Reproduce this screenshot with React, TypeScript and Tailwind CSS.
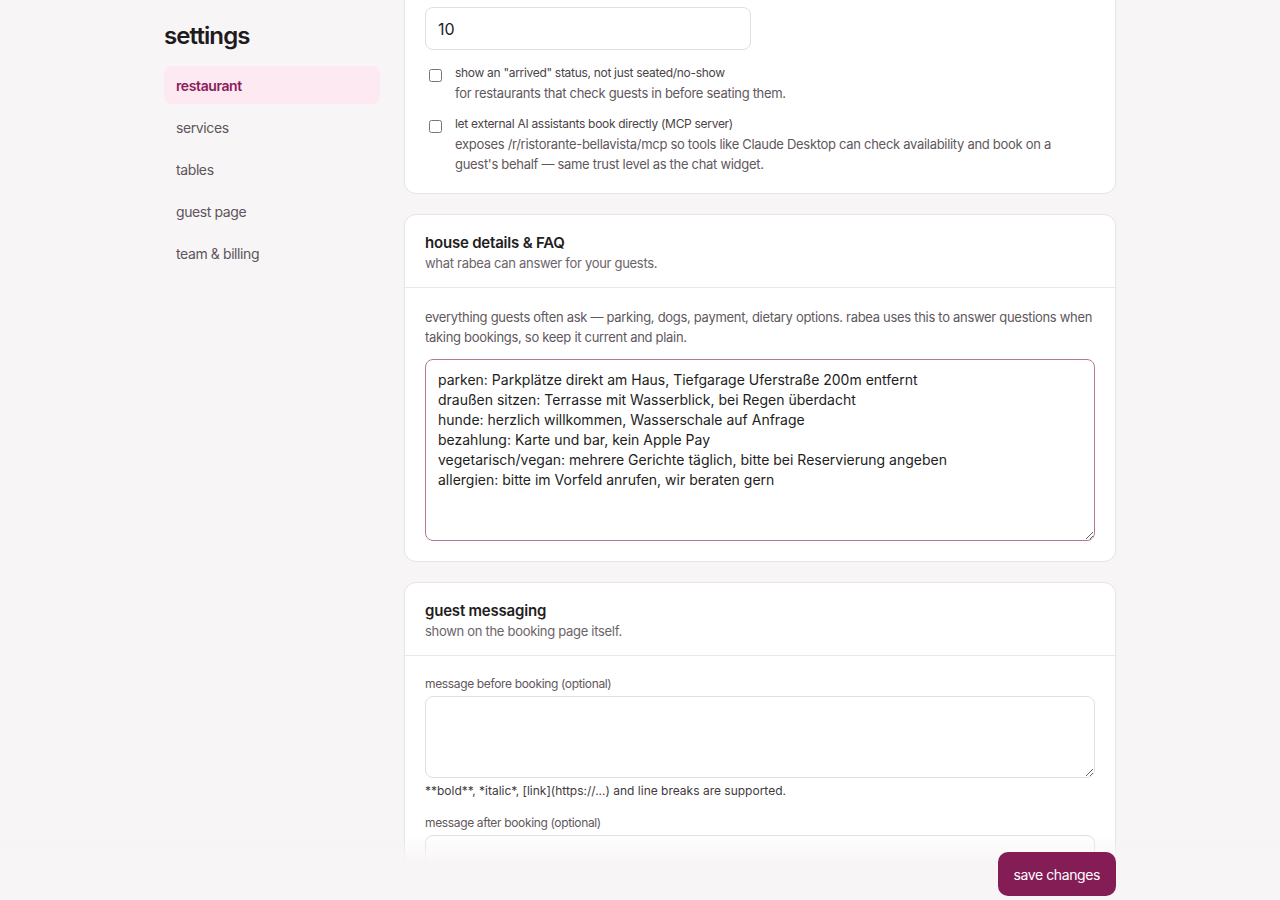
import { useState } from "react";

const navItems = ["restaurant", "services", "tables", "guest page", "team & billing"];

const faq = `parken: Parkplätze direkt am Haus, Tiefgarage Uferstraße 200m entfernt
draußen sitzen: Terrasse mit Wasserblick, bei Regen überdacht
hunde: herzlich willkommen, Wasserschale auf Anfrage
bezahlung: Karte und bar, kein Apple Pay
vegetarisch/vegan: mehrere Gerichte täglich, bitte bei Reservierung angeben
allergien: bitte im Vorfeld anrufen, wir beraten gern`;

function CardHeader({ title, sub }: { title: string; sub: string }) {
  return (
    <div className="px-5 pt-[17px] pb-[15px] border-b border-[#ece8eb]">
      <div className="text-[15px] leading-[22px] font-semibold tracking-[-0.2px] text-[#231d21]">{title}</div>
      <div className="text-[13px] leading-[18px] tracking-[-0.3px] text-[#6b6469]">{sub}</div>
    </div>
  );
}

function Check({ label, desc }: { label: string; desc: string[] }) {
  return (
    <label className="flex gap-[13px] items-start">
      <input type="checkbox" className="ml-1 mt-[4px] h-[13px] w-[13px] shrink-0" />
      <div>
        <div className="text-[12px] leading-4 tracking-[-0.3px] text-[#4a4448] mb-[2px]">{label}</div>
        {desc.map((d) => (
          <div key={d} className="text-[13px] leading-5 tracking-[-0.3px] text-[#5f585d]">{d}</div>
        ))}
      </div>
    </label>
  );
}

export default function App() {
  const [text, setText] = useState(faq);

  return (
    <div className="h-screen overflow-hidden bg-[#f8f5f7] font-['Inter',sans-serif] text-[#231d21]">
      <div className="max-w-[952px] mx-auto flex gap-6">
        <aside className="w-[216px] shrink-0 pt-5">
          <h1 className="text-[24px] leading-8 font-semibold tracking-[-0.9px] text-[#1f1a1d] mb-[14px]">settings</h1>
          <nav className="flex flex-col gap-1">
            {navItems.map((n, i) => (
              <a
                key={n}
                href="#"
                className={
                  i === 0
                    ? "h-[38px] flex items-center px-3 rounded-lg bg-[#fde9f2] text-[#8b1d5a] text-[14px] font-semibold tracking-[-0.4px]"
                    : "h-[38px] flex items-center px-3 rounded-lg text-[#5d565b] text-[14px] tracking-[-0.4px]"
                }
              >
                {n}
              </a>
            ))}
          </nav>
        </aside>

        <main className="flex-1 flex flex-col gap-5 mt-[-38px] pb-24">
          <section className="bg-white border border-[#e7e3e6] rounded-xl px-5 pt-5 pb-[19px]">
            <div className="text-[12px] leading-4 tracking-[-0.3px] text-[#5f585d] mb-2">largest party bookable online (beyond this, guests call)</div>
            <input
              defaultValue="10"
              className="w-[326px] h-[43px] px-3 rounded-lg border border-[#e2dee1] text-[16px] text-[#231d21] outline-none"
            />
            <div className="mt-[15px] flex flex-col gap-[13px]">
              <Check
                label={'show an "arrived" status, not just seated/no-show'}
                desc={["for restaurants that check guests in before seating them."]}
              />
              <Check
                label="let external AI assistants book directly (MCP server)"
                desc={[
                  "exposes /r/ristorante-bellavista/mcp so tools like Claude Desktop can check availability and book on a",
                  "guest's behalf — same trust level as the chat widget.",
                ]}
              />
            </div>
          </section>

          <section className="bg-white border border-[#e7e3e6] rounded-xl">
            <CardHeader title="house details & FAQ" sub="what rabea can answer for your guests." />
            <div className="px-5 pt-[19px] pb-5">
              <p className="text-[13px] leading-5 tracking-[-0.3px] text-[#5f585d] mb-3">
                everything guests often ask — parking, dogs, payment, dietary options. rabea uses this to answer questions when taking bookings, so keep it current and plain.
              </p>
              <textarea
                value={text}
                onChange={(e) => setText(e.target.value)}
                className="block w-full h-[182px] px-3 pt-[10px] rounded-lg border border-[#b5779a] text-[14px] leading-5 text-[#231d21] outline-none"
              />
            </div>
          </section>

          <section className="bg-white border border-[#e7e3e6] rounded-xl">
            <CardHeader title="guest messaging" sub="shown on the booking page itself." />
            <div className="p-5">
              <div className="text-[12px] leading-4 tracking-[-0.35px] text-[#5f585d] mb-1">message before booking (optional)</div>
              <textarea className="block w-full h-[82px] px-3 py-2 rounded-lg border border-[#e2dee1] text-[14px] outline-none" />
              <div className="text-[12px] leading-4 text-[#3f3a3e] mt-[5px]">
                **bold**, *italic*, [link](https://...) and line breaks are supported.
              </div>
              <div className="text-[12px] leading-4 tracking-[-0.35px] text-[#5f585d] mt-4 mb-1">message after booking (optional)</div>
              <textarea className="block w-full h-[82px] px-3 py-2 rounded-lg border border-[#e2dee1] text-[14px] outline-none" />
            </div>
          </section>
        </main>
      </div>

      <div className="fixed inset-x-0 bottom-0 bg-gradient-to-b from-[#f8f5f700] to-[#f8f5f7] to-40% pt-4 pb-1">
        <div className="max-w-[952px] mx-auto flex justify-end">
          <button className="h-[44px] px-4 rounded-[10px] bg-[#841c56] text-white text-[14px] tracking-[-0.4px]">save changes</button>
        </div>
      </div>
    </div>
  );
}
